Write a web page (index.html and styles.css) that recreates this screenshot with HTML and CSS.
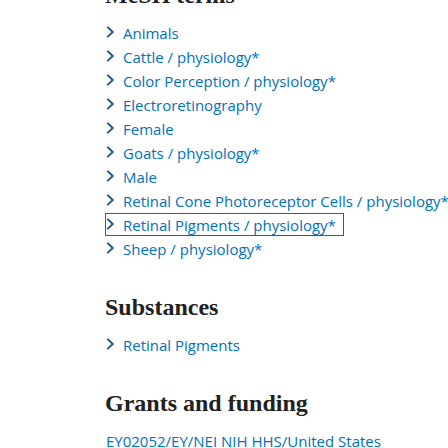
FILE: index.html
```html
<!DOCTYPE html>
<html lang="en">
<head>
<meta charset="utf-8">
<title>MeSH terms</title>
<link rel="stylesheet" href="styles.css">
</head>
<body>
<main class="content">
  <section class="section section-first">
    <h2 class="heading">MeSH terms</h2>
    <ul class="term-list">
      <li class="term"><a class="term-link" href="#"><svg class="chev" viewBox="0 0 10 12" width="10" height="12"><path d="M2 1.5 L6.8 6 L2 10.5"/></svg><span>Animals</span></a></li>
      <li class="term"><a class="term-link" href="#"><svg class="chev" viewBox="0 0 10 12" width="10" height="12"><path d="M2 1.5 L6.8 6 L2 10.5"/></svg><span>Cattle / physiology*</span></a></li>
      <li class="term"><a class="term-link" href="#"><svg class="chev" viewBox="0 0 10 12" width="10" height="12"><path d="M2 1.5 L6.8 6 L2 10.5"/></svg><span>Color Perception / physiology*</span></a></li>
      <li class="term"><a class="term-link" href="#"><svg class="chev" viewBox="0 0 10 12" width="10" height="12"><path d="M2 1.5 L6.8 6 L2 10.5"/></svg><span>Electroretinography</span></a></li>
      <li class="term"><a class="term-link" href="#"><svg class="chev" viewBox="0 0 10 12" width="10" height="12"><path d="M2 1.5 L6.8 6 L2 10.5"/></svg><span>Female</span></a></li>
      <li class="term"><a class="term-link" href="#"><svg class="chev" viewBox="0 0 10 12" width="10" height="12"><path d="M2 1.5 L6.8 6 L2 10.5"/></svg><span>Goats / physiology*</span></a></li>
      <li class="term"><a class="term-link" href="#"><svg class="chev" viewBox="0 0 10 12" width="10" height="12"><path d="M2 1.5 L6.8 6 L2 10.5"/></svg><span>Male</span></a></li>
      <li class="term"><a class="term-link" href="#"><svg class="chev" viewBox="0 0 10 12" width="10" height="12"><path d="M2 1.5 L6.8 6 L2 10.5"/></svg><span>Retinal Cone Photoreceptor Cells / physiology*</span></a></li>
      <li class="term"><a class="term-link term-focus" href="#"><svg class="chev" viewBox="0 0 10 12" width="10" height="12"><path d="M2 1.5 L6.8 6 L2 10.5"/></svg><span>Retinal Pigments / physiology*</span></a></li>
      <li class="term"><a class="term-link" href="#"><svg class="chev" viewBox="0 0 10 12" width="10" height="12"><path d="M2 1.5 L6.8 6 L2 10.5"/></svg><span>Sheep / physiology*</span></a></li>
    </ul>
  </section>
  <section class="section">
    <h2 class="heading">Substances</h2>
    <ul class="term-list">
      <li class="term"><a class="term-link" href="#"><svg class="chev" viewBox="0 0 10 12" width="10" height="12"><path d="M2 1.5 L6.8 6 L2 10.5"/></svg><span>Retinal Pigments</span></a></li>
    </ul>
  </section>
  <section class="section">
    <h2 class="heading">Grants and funding</h2>
    <p class="grant"><a class="grant-link" href="#">EY02052/EY/NEI NIH HHS/United States</a></p>
  </section>
</main>
</body>
</html>
```
FILE: styles.css
```css
html, body {
  margin: 0;
  padding: 0;
  background: #ffffff;
}

body {
  font-family: "Open Sans", "Noto Sans", sans-serif;
  font-size: 15px;
  color: #212121;
  overflow: hidden;
}

.content {
  padding-left: 105px;
  width: 343px;
}

.section {
  margin-top: 31px;
}

.section-first {
  margin-top: -20px;
}

.heading {
  margin: 0 0 11px 0;
  font-family: "Liberation Serif", "Times New Roman", serif;
  font-weight: 700;
  font-size: 24px;
  line-height: 30px;
  color: #212121;
  white-space: nowrap;
}

.term-list {
  list-style: none;
  margin: 0;
  padding: 0;
}

.term {
  height: 24px;
  white-space: nowrap;
}

.term-link {
  display: inline-flex;
  align-items: center;
  border: 1px solid transparent;
  padding: 1px 7px 0 0;
  line-height: 20px;
  color: #0071bc;
  text-decoration: none;
}

.term-focus {
  border-color: #e8141c;
}

.chev {
  flex: none;
  margin-right: 7px;
  margin-top: -2px;
  fill: none;
  stroke: #20558a;
  stroke-width: 1.9;
  stroke-linecap: square;
  stroke-linejoin: miter;
}

.grant {
  margin: 0;
  padding-left: 1px;
  line-height: 24px;
  white-space: nowrap;
}

.grant-link {
  color: #0071bc;
  text-decoration: none;
}
```
